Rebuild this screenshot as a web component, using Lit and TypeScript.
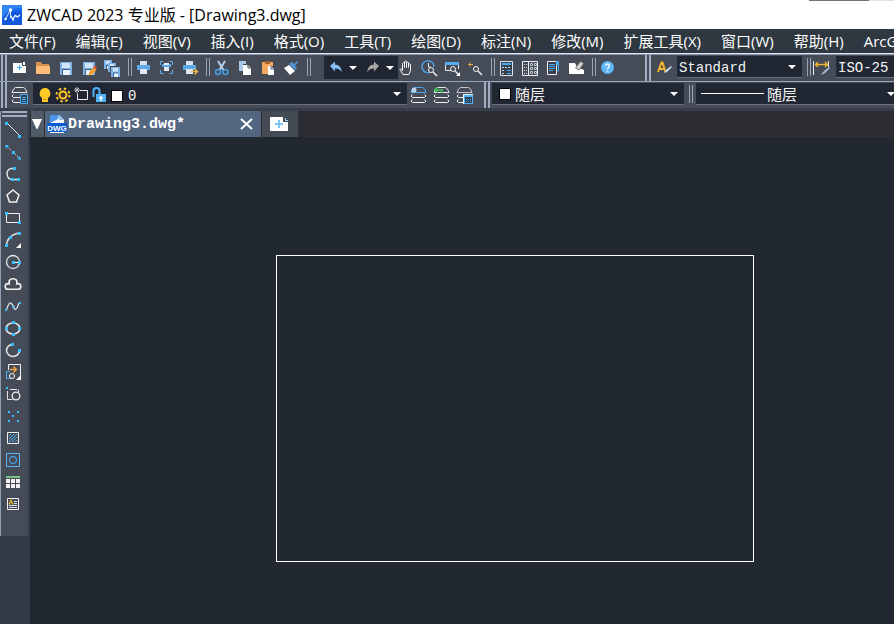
import { LitElement, html, svg, css } from "lit";
import { customElement, property } from "lit/decorators.js";

const disk = (x: number, y: number, s: number) => svg`
  <path d="M${x} ${y}h${s}v${s + 1}h${-s}z" fill="#7fb2e6"/>
  <rect x=${x + 2} y=${y + 1} width=${s - 4} height=${s / 2 - 1} fill="#cfe6fb"/>
  <rect x=${x + 2} y=${y + s / 2 + 1} width=${s - 4} height=${s / 2} fill="#3c6287"/>
  <rect x=${x + 3} y=${y + s / 2 + 2} width=${s - 5} height=${s / 2 - 1} fill="#e9f3fc"/>`;

const printer = svg`
  <path d="M8 3h7v4h-7z" fill="#d9e2ec"/>
  <path d="M5 7h13v5h-13z" fill="#5fa8e6"/>
  <path d="M8 11h7v5h-7z" fill="#dfe8f4"/>`;

const sheets = (top: string) => svg`
  <path d="M7.500 2.500h8l2 1.500 1.500 3.500h-15l1.500-3.500z" fill="none" stroke=${top}/>
  <path d="M5.500 9.500l-1.500 1.500 1.500 1.500h12l1.500-1.500-1.500-1.500M5.500 14.500l-1.500 1.500 1.500 1.500h12l1.500-1.500-1.500-1.500" fill="none" stroke="#f0f1f4"/>`;

const node = (x: number, y: number) => svg`<rect x=${x} y=${y} width="3" height="3" fill="#35c0ff"/>`;

const lens = (x: number, y: number) => svg`
  <circle cx=${x} cy=${y} r="2.500" fill="#454b57" stroke="#f2f2f2"/>
  <path d="M${x + 2} ${y + 2}l4 4" stroke="#f2f2f2" stroke-width="1.400"/>`;

const ICONS: Record<string, unknown> = {
  new: svg`<path d="M5 5h9v3h4v7h-13z" fill="#fff"/><path d="M15 4h2v3h-2z" fill="#fff"/><path d="M11.500 7v5M9 9.500h5" stroke="#35a8ee"/>`,
  open: svg`<path d="M5 4h5l1 2h7v2h-13z" fill="#d98f45"/><path d="M5 8h14v8h-14z" fill="#ffbc78"/>`,
  save: disk(6, 4, 12),
  saveAs: svg`${disk(6, 4, 12)}<path d="M11.500 17.500l1-4 4-4 3 2.500-4 4.500z" fill="#f5a033"/><path d="M16 9l2-1.500 2 2-1.500 2z" fill="#e0523d"/>`,
  saveAll: svg`${disk(4, 2, 8)}${disk(8, 5, 8)}<path d="M10 8h11v11h-11z" fill="#454b57"/>${disk(11, 9, 9)}`,
  print: printer,
  preview: svg`<path d="M5.500 7v-3.500h3M14.500 3.500h3v3.500M5.500 12v3.500h3M14.500 15.500h3v-3.500" fill="none" stroke="#5fb4f5"/><path d="M7 6h9v3h-9z" fill="#5fa8e6"/><path d="M9 5h5v2h-5zM9 9h5v4h-5z" fill="#e4ecf5"/>`,
  plot: svg`${printer}<path d="M13 13.500h6M16.500 10.500l3 3-3 3" fill="none" stroke="#f0b64e" stroke-width="1.300"/>`,
  cut: svg`<path d="M8 3l5.500 9M15 3l-5.500 9" stroke="#b5d2ee" stroke-width="2"/><circle cx="8" cy="14" r="2.500" fill="none" stroke="#43a2e8" stroke-width="1.400"/><circle cx="15.500" cy="14" r="2.500" fill="none" stroke="#43a2e8" stroke-width="1.400"/>`,
  copy: svg`<path d="M6 3h7v3h-3v7h-4z" fill="#a9c8e6"/><path d="M10 7h5l3 3v7h-8z" fill="#fff"/><path d="M15 7v3h3" fill="none" stroke="#454b57"/>`,
  paste: svg`<path d="M6 4h11v4h-5v8h-6z" fill="#f5a85e"/><path d="M9 3h5v3h-5z" fill="#a8642a"/><path d="M12 8h3l3 3v6h-6z" fill="#fff"/><path d="M15 8v3h3" fill="none" stroke="#555b66"/>`,
  brush: svg`<path d="M5 10l5-3 6 6-5 4z" fill="#fff"/><path d="M10 6l3-2 2 2 3-3 1 1-3 4 2 2-2 2z" fill="#4d93d6"/>`,
  undo: svg`<path d="M6 9l5-4.500v3q6 0 7 8-2-4-7-4v3z" fill="#83bff5"/>`,
  redo: svg`<path d="M18 9l-5-4.500v3q-6 0-7 8 2-4 7-4v3z" fill="#aaa6a6"/>`,
  hand: svg`<path d="M9 16.500l-3-5q.5-1.500 2 0l.5 1v-7q.8-1.500 2 0v4-6q.8-1 2 0v6-5q.8-1 2 0v5-3q1-1 2 0v6l-1.500 4z" fill="none" stroke="#f6f6f6"/>`,
  zoomRealtime: svg`<path d="M14 14a6 6 0 1 1 3-5" fill="none" stroke="#4da6ec" stroke-width="1.400"/><path d="M11.500 5v4h2" fill="none" stroke="#e6eef6"/>${lens(14, 12)}`,
  zoomWindow: svg`<path d="M5 4h14v3h-14z" fill="#55aef2"/><path d="M5.500 7v5.500h6M18.500 7v4" fill="none" stroke="#e8e8e8"/>${lens(13, 11)}<path d="M20 14v4h-4z" fill="#fff"/>`,
  zoomPrevious: svg`<path d="M10 6.500h-5M7.500 4.500l-2 2 2 2" fill="none" stroke="#f0a742"/>${lens(13, 11)}`,
  properties: svg`<path d="M5.500 3.500h12v14h-12z" fill="#39414d" stroke="#dde3ea"/><path d="M7 5h9v2h-9z" fill="#4ba9f0"/><path d="M7 9.500h9M7 12.500h3M7 15.500h3" stroke="#b9d9f3" stroke-dasharray="2 1"/><path d="M12 12.500h4M12 15.500h4" stroke="#4ba9f0"/>`,
  designCenter: svg`<path d="M4.500 3.500h15v14h-15zM10.500 3.500v14" fill="none" stroke="#eceff3"/><path d="M6 6.500h3M6 9.500h3M6 12.500h3M6 15.500h3" stroke="#d9dde4" stroke-dasharray="1 1"/><path d="M12.500 5.500h2v2h-2zM16.500 5.500h2v2h-2zM12.500 9.500h2v2h-2zM16.500 9.500h2v2h-2zM12.500 13.500h2v2h-2zM16.500 13.500h2v2h-2z" fill="none" stroke="#bfc5cf"/>`,
  palettes: svg`<path d="M6.500 3.500h9v13h-9z" fill="#39414d" stroke="#f2f2f2"/><path d="M8 6.500h6M8 8.500h6M8 10.500h6M8 12.500h4" stroke="#4ba9f0"/><path d="M15 3h3v4h-3z" fill="#4ba9f0"/><path d="M17.500 6v7h-2" stroke="#4ba9f0" fill="none"/>`,
  eraser: svg`<path d="M5 5h6l2 4 7 3v4h-15z" fill="#fff"/><path d="M11.500 10l5-6.500 3 2-4.500 6.500z" fill="#d8d4d0" stroke="#77777c"/>`,
  help: svg`<circle cx="11.500" cy="9.500" r="6.500" fill="#5fb8f8"/><path d="M9.500 8q.3-2 2-2t2 1.800q0 1-1 1.700t-1 1.500M11.500 12.200v1.300" fill="none" stroke="#fff" stroke-width="1.300"/>`,
  textStyle: svg`<path d="M6 14l3.500-9.500h1l3 9.500M7.500 11h4" fill="none" stroke="#f2b52e" stroke-width="2"/><path d="M12 15l2-3 5-4 1 1-5 5z" fill="#c6dcf2"/>`,
  dimStyle: svg`<path d="M2.500 3v14M17.500 3v6" stroke="#e9eef6"/><path d="M4 6.500h13M7 4l-2.500 2.500 2.500 2.500M14 4l2.500 2.500-2.500 2.500" fill="none" stroke="#f2b52e" stroke-width="1.400"/><path d="M10 17l2-3 6-5 1 1-5 5z" fill="#a9bedb"/>`,
  layers: svg`${sheets("#e6e8ec")}<path d="M12 8h8v11h-8z" fill="#454b57"/><path d="M12.500 9.500h7v9h-7z" fill="#2f3f52" stroke="#4fb2f7"/><path d="M14 12.500h4M14 14.500h4M14 16.500h4" stroke="#4fb2f7"/>`,
  layerCurrent: svg`${sheets("#4fa9ee")}<circle cx="7" cy="5" r="2.500" fill="#bcd3ea"/>`,
  layerPrevious: svg`${sheets("#e6e8ec")}<path d="M12 8v-3h-7M7.500 2.500l-3 2.500 3 2.500" fill="none" stroke="#45c65a" stroke-width="1.500"/>`,
  layerStates: svg`${sheets("#cfc6d2")}<path d="M10 9h10v10h-10z" fill="#e8f4fd"/><path d="M11.500 10.500h8v8h-8z" fill="#2f3f52" stroke="#4fb2f7"/><path d="M11 10h9v2h-9z" fill="#4fb2f7"/><path d="M13 14.500h5M13 16.500h5" stroke="#4fb2f7" stroke-dasharray="1 1"/>`,
  bulb: svg`<path d="M9 5a5.500 5.500 0 0 1 3 10v4h-6v-4a5.500 5.500 0 0 1 3-10z" fill="#ffc928"/><path d="M6.500 16.500h5" stroke="#d99c17"/>`,
  sun: svg`<circle cx="9" cy="12" r="3.500" fill="#3a3420" stroke="#ffc52e" stroke-width="2"/><circle cx="9" cy="12" r="6.500" fill="none" stroke="#ffc52e" stroke-width="2" stroke-dasharray="2.500 2.600"/>`,
  viewport: svg`<path d="M8 7.500h7.500v9h-10v-6" fill="none" stroke="#eee"/><path d="M2 7h6M5 4v6M3 5l4 4M7 5l-4 4" stroke="#c4c4c4"/>`,
  lock: svg`<path d="M3.500 14v-6q0-3 3-3t3 3v3" fill="none" stroke="#4fb2f7" stroke-width="2"/><path d="M6 11h10v8h-10z" fill="#4fb2f7"/><path d="M11 13v5M9 15h4" stroke="#fff" stroke-width="1.500"/>`,
  swatch: svg`<rect x="3.500" y="7.500" width="11" height="11" fill="#fff" stroke="#0a0a0a"/>`,
  arrow: svg`<path d="M1 9h8l-4 4z" fill="#fff"/>`,
  line: svg`<path d="M5 4l13 13" stroke="#e9edf1"/>${node(3, 3)}${node(16, 16)}`,
  ray: svg`<path d="M5 5l12 12" stroke="#d4e4ee" stroke-dasharray="2 1.500"/>${node(10, 10)}<path d="M3 4l4 0-3 4zM19 19l-4-1 3-3z" fill="#35c0ff"/>`,
  polyline: svg`<path d="M14 5.500h-4a4.500 5 0 0 0-5 5q0 6 6 6h6" fill="none" stroke="#dfe3e8" stroke-width="1.500"/>${node(11, 4)}${node(9, 15)}${node(15, 15)}`,
  polygon: svg`<path d="M11 5l6 5-2.500 7h-7l-2.500-7z" fill="none" stroke="#f2f2f2" stroke-width="1.500"/>`,
  rectangle: svg`<path d="M4.500 6.500h13v9h-13z" fill="none" stroke="#f2f2f2"/>${node(3, 5)}${node(16, 14)}`,
  arc: svg`<path d="M4.500 17q0-10 12-13" fill="none" stroke="#dfe3e8" stroke-width="1.500"/>${node(3, 15)}${node(7, 7)}${node(16, 3)}<path d="M19 14v5h-5z" fill="#fff"/>`,
  circle: svg`<circle cx="11" cy="11" r="6.500" fill="none" stroke="#dfe3e8" stroke-width="1.300"/><path d="M11 11.500h6" stroke="#fff"/>${node(10, 10)}${node(16, 10)}`,
  cloud: svg`<path d="M6 16.200a2.800 2.800 0 0 1 0-5.600q.8 0 1.200.2-1-5 3.800-5t3.800 5q.4-.2 1.200-.2a2.800 2.800 0 0 1 0 5.600z" fill="none" stroke="#f2f2f2" stroke-width="1.600"/>`,
  spline: svg`<path d="M4.500 15q2.500-9 5-6.500t3 5.500q2 2 4.500-6" fill="none" stroke="#dfe3e8" stroke-width="1.200"/><rect x="3" y="14" width="2" height="2" fill="#35c0ff"/><rect x="10" y="11" width="2" height="2" fill="#35c0ff"/><rect x="17" y="7" width="2" height="2" fill="#35c0ff"/>`,
  ellipse: svg`<ellipse cx="11" cy="11.500" rx="7" ry="5.500" fill="none" stroke="#f2f2f2" stroke-width="1.500"/>${node(10, 4)}${node(3, 10)}${node(16, 10)}${node(10, 16)}`,
  ellipseArc: svg`<path d="M10 5.500a6.500 6 0 1 0 7.500 6" fill="none" stroke="#dfe3e8" stroke-width="1.600"/>${node(9, 4)}${node(16, 10)}`,
  insertBlock: svg`<path d="M6.500 9v-5.500h12v12" fill="none" stroke="#f2f2f2"/><path d="M8 8.500h6M11.500 5.500l3 3-3 3" fill="none" stroke="#f2a53a" stroke-width="1.400"/><path d="M8 10.500h-3.500v7h4" fill="none" stroke="#4fb2f7"/><circle cx="10" cy="15" r="2.500" fill="none" stroke="#fff"/><path d="M19 14v5h-5z" fill="#fff"/>`,
  makeBlock: svg`<path d="M5.500 8v8.500h5" fill="none" stroke="#e6e6e6"/><path d="M8 6.500h7M16.500 6.500v3" stroke="#e6e6e6"/><circle cx="14" cy="13" r="3.800" fill="none" stroke="#f2f2f2" stroke-width="1.300"/><rect x="4" y="4" width="2" height="2" fill="#35c0ff"/>`,
  points: svg`${[[6, 6], [15, 6], [10, 10], [6, 15], [15, 15]].map(([x, y]) => svg`<rect x=${x} y=${y} width="2" height="2" fill="#35c0ff"/>`)}`,
  hatch: svg`<path d="M5.500 5.500h11v11h-11z" fill="none" stroke="#f2f2f2"/><path d="M7 9l2-2M7 12l5-5M7 15l8-8M10 15l5-5M13 15l2-2" stroke="#4fb2f7"/>`,
  region: svg`<path d="M4.500 4.500h13v13h-13z" fill="none" stroke="#5cb6f8"/><circle cx="11" cy="11" r="3.500" fill="none" stroke="#4d9bd6" stroke-width="1.300"/>`,
  table: svg`<path d="M4 5h14v2h-14z" fill="#77c687"/><path d="M4 8h4v4h-4zM9 8h4v4h-4zM14 8h4v4h-4zM4 13h4v4h-4zM9 13h4v4h-4zM14 13h4v4h-4z" fill="#f2f0f0"/>`,
  mtext: svg`<path d="M5.500 5.500h11v11h-11z" fill="none" stroke="#f2f2f2"/><path d="M7 11.500l2-4 2 4" fill="none" stroke="#f2b52e" stroke-width="1.400"/><path d="M12 8.500h3M12 10.500h3M7 12.500h8M7 14.500h8" stroke="#cfe0ee"/>`,
};

const icon = (name: string, w = 23) =>
  html`<svg class="icon" width=${w} height="22" viewBox="0 0 ${w} 22" aria-hidden="true">${ICONS[name]}</svg>`;

const tool = (name: string, label: string, w = 23) =>
  html`<button class="tool" type="button" aria-label=${label}>${icon(name, w)}</button>`;

const group = (items: string[][]) => items.map(([name, label]) => tool(name, label));

const FILE = [["new", "新建"], ["open", "打开"], ["save", "保存"], ["saveAs", "另存为"], ["saveAll", "全部保存"]];
const PRINT = [["print", "打印"], ["preview", "打印预览"], ["plot", "发布"]];
const EDIT = [["cut", "剪切"], ["copy", "复制"], ["paste", "粘贴"], ["brush", "特性匹配"]];
const VIEW = [["hand", "平移"], ["zoomRealtime", "实时缩放"], ["zoomWindow", "窗口缩放"], ["zoomPrevious", "缩放上一个"]];
const PANELS = [["properties", "特性"], ["designCenter", "设计中心"], ["palettes", "工具选项板"], ["eraser", "清理"]];
const LAYER = [["layerCurrent", "置为当前图层"], ["layerPrevious", "上一个图层"], ["layerStates", "图层状态"]];
const LAYER_FLAGS = [["bulb", "开/关"], ["sun", "冻结"], ["viewport", "视口冻结"], ["lock", "锁定"], ["swatch", "颜色"]];
const DRAW = [
  ["line", "直线"], ["ray", "构造线"], ["polyline", "多段线"], ["polygon", "正多边形"], ["rectangle", "矩形"],
  ["arc", "圆弧"], ["circle", "圆"], ["cloud", "修订云线"], ["spline", "样条曲线"], ["ellipse", "椭圆"],
  ["ellipseArc", "椭圆弧"], ["insertBlock", "插入块"], ["makeBlock", "创建块"], ["points", "点"],
  ["hatch", "图案填充"], ["region", "面域"], ["table", "表格"], ["mtext", "多行文字"],
];
const MENU = ["文件(F)", "编辑(E)", "视图(V)", "插入(I)", "格式(O)", "工具(T)", "绘图(D)", "标注(N)", "修改(M)", "扩展工具(X)", "窗口(W)", "帮助(H)", "ArcGIS"];

const shared = css`
  * { box-sizing: border-box; }
  button { border: 0; padding: 0; margin: 0; background: none; color: inherit; font: inherit; }
  svg { display: block; flex: none; }
  .tool { display: block; flex: none; }
`;

@customElement("combo-box")
export class ComboBox extends LitElement {
  @property() label = "";
  @property() value = "";
  static styles = [shared, css`
    :host { display: flex; flex: none; align-items: center; background: #202632; border-bottom: 1px solid #6b7078; color: #fff; }
    .field { position: relative; display: flex; flex: 1; height: 100%; align-items: center; min-width: 0; }
    select {
      appearance: none; flex: 1; min-width: 0; height: 100%; border: 0; margin: 0; padding: 2px 0 0 2px; background: none;
      color: #f4f4f4; font: 14px "Liberation Mono", "Noto Sans CJK SC", monospace;
    }
    :host([cjk]) select { padding: 0 0 2px 2px; font-size: 15px; font-family: "Noto Sans CJK SC", sans-serif; }
    :host([low]) select { padding-top: 5px; }
    .icon { position: absolute; right: 5px; top: 0; pointer-events: none; }
  `];
  render() {
    return html`<slot></slot><div class="field">
      <select aria-label=${this.label}><option>${this.value}</option></select>
      ${icon("arrow", 10)}
    </div>`;
  }
}

@customElement("app-root")
export class AppRoot extends LitElement {
  static styles = [shared, css`
    :host {
      display: flex; flex-direction: column; min-height: 100vh; overflow: hidden; background: #373e49; color: #fff;
      font-family: "Open Sans", "Noto Sans CJK SC", sans-serif;
    }
    .title { display: flex; height: 29px; background: #fff; color: #000; align-items: center; padding-left: 2px; gap: 5px; }
    .title h1 { flex: 1; margin: 0; font-size: 16px; line-height: 20px; font-weight: 400; white-space: nowrap; }
    .edge { align-self: flex-start; width: 85px; height: 1px; background: linear-gradient(90deg, #767676 60px, #e3e3e3 60px); }
    .menu { display: flex; gap: 2px; height: 24px; background: #2f3840; overflow: hidden; }
    .menu button { flex: none; padding: 0 9px; font-size: 15px; line-height: 24px; white-space: nowrap; }
    .bar { display: flex; overflow: hidden; background: #454b57; }
    .main-bar { height: 28px; border-top: 1px solid #e4e7f3; box-shadow: inset 0 1px #8994ab; padding-top: 1px; }
    .main-bar > .tool, .views > .tool { margin-top: 2px; }
    .layer-bar { height: 27px; border-top: 1px solid #98a4bb; }
    .layer-bar .tool { margin-top: 1px; }
    .grip { flex: none; width: 6px; margin: 0 1px; border: solid #a0adc2; border-width: 0 2px; }
    .far { margin-left: 26px; }
    .near { margin-left: 8px; }
    .sep { flex: none; width: 4px; height: 18px; margin: 3px 0 0 5px; border: solid #97a5ba; border-width: 0 1px; }
    .views { display: flex; margin-left: -4px; }
    .history { display: flex; flex: none; height: 23px; margin: 1px 0 0 13px; background: #202632; }
    .history .tool { margin-top: 1px; }
    .history .drop { width: 14px; padding-left: 1px; }
    .style, .dim { height: 22px; margin: 1px 0 0 2px; }
    .style { width: 125px; }
    .dim { width: 120px; }
    .layer, .color, .linetype { height: 22px; margin-top: 1px; }
    .layer { width: 374px; margin-left: 2px; padding-left: 3px; }
    .color { width: 192px; margin-left: 1px; }
    .linetype { width: 205px; margin-left: 3px; }
    .chip { width: 12px; height: 12px; margin: 0 2px 0 7px; background: #fff; border: 1px solid #000; }
    .dash { width: 63px; height: 1px; margin: 0 1px 0 5px; background: #fff; }
    .work { display: flex; flex: 1; margin-top: 3px; }
    .side { width: 30px; flex: none; background: #353b46; }
    .draw { width: 28px; padding: 0 0 21px 1px; background: #454b57; border-left: 1px solid #8f9db3; }
    .draw::before { content: ""; display: block; height: 2px; margin: 0 1px 2px 0; border: solid #a0adc2; border-width: 2px 0; }
    .doc { display: flex; flex-direction: column; flex: 1; min-width: 0; }
    .tabs { display: flex; height: 26px; background: #2c2e33; gap: 1px; padding-left: 1px; }
    .list { display: flex; width: 13px; padding-right: 1px; background: #4f5b66; align-items: center; justify-content: center; }
    .tab { display: flex; width: 216px; background: #53667f; align-items: center; padding: 0 8px 0 2px; }
    .name { flex: 1; padding-left: 1px; text-align: left; font: bold 15px "Liberation Mono", monospace; }
    .add { display: flex; width: 36px; padding-right: 2px; background: #454b55; align-items: center; justify-content: center; }
    .canvas { flex: 1; background: #21282f; }
    .canvas svg { width: 100%; height: 100%; min-height: 440px; }
  `];

  render() {
    return html`
      <header class="title">
        <svg width="20" height="20" viewBox="0 0 20 20" aria-hidden="true">
          <rect width="20" height="20" fill="#1a6cf0"/><path d="M0 14q8-10 20-8v14h-20z" fill="#1459dd"/><path d="M0 0h20v3q-12-1-20 9z" fill="#2f86f7"/>
          <path d="M3.500 14l5-9v8" fill="none" stroke="#d6e8ff"/>
          <path d="M9 11l2 4q2-6 3-4t4-1" fill="none" stroke="#e8f3ff" stroke-width="1.300"/>
          <circle cx="8.500" cy="5" r="1.700" fill="#fff"/><circle cx="3.500" cy="14" r="1.300" fill="#fff"/>
        </svg>
        <h1>ZWCAD 2023 专业版 - [Drawing3.dwg]</h1>
        <span class="edge"></span>
      </header>
      <nav class="menu">${MENU.map((m) => html`<button type="button">${m}</button>`)}</nav>
      <div class="bar main-bar">
        <span class="grip"></span>${group(FILE)}<span class="sep"></span>${group(PRINT)}
        <span class="sep"></span>${group(EDIT)}<span class="sep"></span>
        <div class="history">
          ${tool("undo", "撤销")}<button class="tool drop" type="button" aria-label="撤销列表">${icon("arrow", 10)}</button>
          ${tool("redo", "重做")}<button class="tool drop" type="button" aria-label="重做列表">${icon("arrow", 10)}</button>
        </div>
        <div class="views">${group(VIEW)}</div><span class="sep"></span>
        ${group(PANELS)}<span class="sep"></span>${tool("help", "帮助")}
        <span class="grip far"></span>${tool("textStyle", "文字样式")}
        <combo-box class="style" label="文字样式" value="Standard"></combo-box><span class="sep"></span>
        ${tool("dimStyle", "标注样式")}
        <combo-box class="dim" label="标注样式" value="ISO-25"></combo-box>
      </div>
      <div class="bar layer-bar">
        <span class="grip"></span>${tool("layers", "图层特性管理器")}
        <combo-box class="layer" low label="图层" value="0">${LAYER_FLAGS.map(([n, l]) => tool(n, l, 18))}</combo-box>
        ${group(LAYER)}
        <span class="grip near"></span>
        <combo-box class="color" cjk label="颜色" value="随层"><span class="chip"></span></combo-box>
        <span class="sep"></span>
        <combo-box class="linetype" cjk label="线型" value="随层"><span class="dash"></span></combo-box>
      </div>
      <div class="work">
        <aside class="side"><div class="draw">${DRAW.map(([n, l]) => tool(n, l, 22))}</div></aside>
        <main class="doc">
          <div class="tabs">
            <button class="list" type="button" aria-label="图纸列表">
              <svg width="10" height="10" viewBox="0 0 10 10" aria-hidden="true"><path d="M0 0h10l-4.500 10h-1z" fill="#fff"/></svg>
            </button>
            <div class="tab">
              <svg width="20" height="22" viewBox="0 0 20 22" aria-hidden="true">
                <path d="M3 2h9l5 5v13h-14z" fill="#f4f8fc"/><path d="M3 2h9l-1 4-8 4z" fill="#4d95e8"/><path d="M12 2l5 5h-5z" fill="#8fc0f2"/>
                <rect y="10" width="20" height="9" fill="#0a5ad0"/>
                <text x="10" y="18" text-anchor="middle" font-family="Liberation Sans" font-size="8" font-weight="700" fill="#fff">DWG</text>
              </svg>
              <button class="name" type="button">Drawing3.dwg*</button>
              <button type="button" aria-label="关闭">
                <svg width="13" height="12" viewBox="0 0 13 12" aria-hidden="true"><path d="M1 1l11 10M12 1l-11 10" stroke="#fff" stroke-width="2"/></svg>
              </button>
            </div>
            <button class="add" type="button" aria-label="新建图纸">
              <svg width="18" height="14" viewBox="0 0 18 14" aria-hidden="true"><path d="M0 0h13v5h5v9h-18z" fill="#fff"/><path d="M15 1h1v2h2v1h-3z" fill="#8fd0fa"/><path d="M9 3v8M5 7h8" stroke="#7cc4f6" stroke-width="2"/></svg>
            </button>
          </div>
          <div class="canvas"><svg aria-label="图纸"><rect x="246.500" y="118.500" width="477" height="306" fill="none" stroke="#fff"/></svg></div>
        </main>
      </div>`;
  }
}
